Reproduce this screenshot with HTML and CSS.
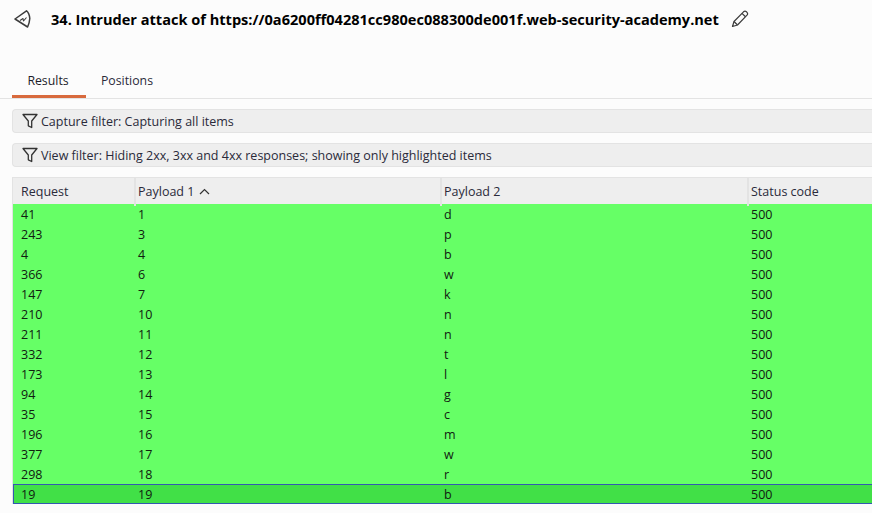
FILE: index.html
```html
<!DOCTYPE html>
<html lang="en">
  <head>
    <meta charset="UTF-8" />
    <meta name="viewport" content="width=device-width, initial-scale=1.0" />
    <title>Intruder attack</title>
    <link rel="stylesheet" href="styles.css">
  </head>
  <body>
    <div class="title-bar">
      <svg class="logo" width="18" height="20" viewBox="0 0 18 20" fill="none" stroke="#3c3c3c" stroke-width="1.5" stroke-linejoin="round">
        <path d="M1 10 12.5 1.8 C14.5 3.5 15.5 6 15.8 9.5 C15.5 13 14.8 15.5 13.6 18 Z" />
        <path d="M6 11.5 9 9.5 9.5 12 12.5 8.5" stroke-width="1.1" />
      </svg>
      <h1>34. Intruder attack of https://0a6200ff04281cc980ec088300de001f.web-security-academy.net</h1>
      <svg class="edit" width="18" height="18" viewBox="0 0 18 18" fill="none" stroke="#3c3c3c" stroke-width="1.2" stroke-linejoin="round">
        <path d="M1.5 16.5 3 11.5 12.5 1.8 C13.5 1 14.5 1 15.5 1.8 L16 2.4 C16.8 3.3 16.8 4.2 16 5.2 L6.5 15 Z" />
        <path d="M3 11.5 6.5 15 M11 3.4 14.5 6.8" />
      </svg>
    </div>

    <div class="tabs">
      <div class="tab active">Results</div>
      <div class="tab">Positions</div>
    </div>

    <div class="filter">
      <svg width="16" height="16" viewBox="0 0 16 16" fill="none" stroke="#333" stroke-width="1.3" stroke-linejoin="round">
        <path d="M1 1.5H15L9.7 8V14.5L6.3 12.8V8Z" />
      </svg>
      Capture filter: Capturing all items
    </div>
    <div class="filter">
      <svg width="16" height="16" viewBox="0 0 16 16" fill="none" stroke="#333" stroke-width="1.3" stroke-linejoin="round">
        <path d="M1 1.5H15L9.7 8V14.5L6.3 12.8V8Z" />
      </svg>
      View filter: Hiding 2xx, 3xx and 4xx responses; showing only highlighted items
    </div>

    <div class="results">
      <div class="row head">
        <div>Request</div>
        <div>Payload 1
          <svg class="sort" width="11" height="7" viewBox="0 0 11 7" fill="none" stroke="#333" stroke-width="1.2"><path d="M1 6 5.5 1.5 10 6" /></svg>
        </div>
        <div>Payload 2</div>
        <div>Status code</div>
      </div>
      <div class="row"><div>41</div><div>1</div><div>d</div><div>500</div></div>
      <div class="row"><div>243</div><div>3</div><div>p</div><div>500</div></div>
      <div class="row"><div>4</div><div>4</div><div>b</div><div>500</div></div>
      <div class="row"><div>366</div><div>6</div><div>w</div><div>500</div></div>
      <div class="row"><div>147</div><div>7</div><div>k</div><div>500</div></div>
      <div class="row"><div>210</div><div>10</div><div>n</div><div>500</div></div>
      <div class="row"><div>211</div><div>11</div><div>n</div><div>500</div></div>
      <div class="row"><div>332</div><div>12</div><div>t</div><div>500</div></div>
      <div class="row"><div>173</div><div>13</div><div>l</div><div>500</div></div>
      <div class="row"><div>94</div><div>14</div><div>g</div><div>500</div></div>
      <div class="row"><div>35</div><div>15</div><div>c</div><div>500</div></div>
      <div class="row"><div>196</div><div>16</div><div>m</div><div>500</div></div>
      <div class="row"><div>377</div><div>17</div><div>w</div><div>500</div></div>
      <div class="row"><div>298</div><div>18</div><div>r</div><div>500</div></div>
      <div class="row selected"><div>19</div><div>19</div><div>b</div><div>500</div></div>
    </div>
  </body>
</html>
```

FILE: styles.css
```css
* {
  box-sizing: border-box;
}
html,
body {
  height: 100%;
  overflow: hidden;
}
body {
  margin: 0;
  background-color: #fcfcfc;
  color: #2a2a3a;
  font-family: "Open Sans", "Noto Sans", sans-serif;
  font-size: 12.5px;
}
.title-bar {
  display: flex;
  align-items: center;
  height: 38px;
  padding-left: 14px;
}
.title-bar h1 {
  margin: 0 12px 0 19px;
  color: #000;
  font-size: 14.57px;
  font-weight: 700;
  white-space: nowrap;
}
.tabs {
  display: flex;
  height: 61px;
  padding: 26px 0 0 12px;
  border-bottom: 1px solid #e3e3e3;
}
.tab {
  width: 74px;
  height: 34px;
  padding-top: 8px;
  margin-right: 4px;
  text-align: center;
  font-size: 12.3px;
}
.tab.active {
  padding-right: 2px;
  border-bottom: 3px solid #d86a3d;
  color: #1c1c2a;
}
.filter {
  display: flex;
  align-items: center;
  gap: 3px;
  height: 24px;
  margin: 10px 0 0 12px;
  padding-left: 9px;
  background-color: #eeeeee;
  border: 1px solid #e3e3e3;
  border-right: none;
  border-radius: 4px 0 0 4px;
}
.results {
  margin: 10px 0 0 12px;
  border-left: 1px solid #e3e3e3;
  border-top: 1px solid #e3e3e3;
}
.row {
  display: grid;
  grid-template-columns: 122px 306px 307px 1fr;
  height: 20px;
  background-color: #66ff66;
  color: #102010;
  line-height: 21px;
}
.row > div {
  padding-left: 8px;
}
.row > div + div {
  padding-left: 3px;
}
.row.head {
  height: 26px;
  background-color: #eeeeee;
  color: #2a2a3a;
  line-height: 28px;
}
.row.head > div + div {
  border-left: 2px solid #e3e3e3;
  padding-left: 2px;
  margin-left: -1px;
}
.sort {
  margin-left: 1px;
  vertical-align: 1px;
}
.row.selected {
  grid-template-columns: 121px 306px 307px 1fr;
  background-color: #41e047;
  border: 1px solid #3358b0;
  border-right: none;
  line-height: 19px;
}
.row.selected > div:first-child {
  padding-left: 7px;
}
```
